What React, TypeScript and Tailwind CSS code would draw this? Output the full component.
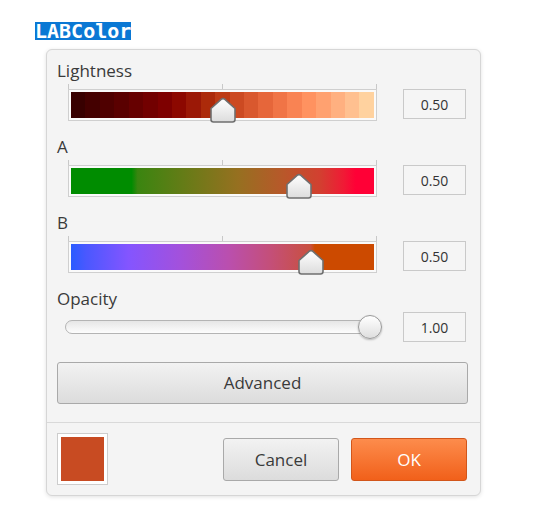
import React from "react";

const lightnessSteps = [
  "#380000", "#440000", "#4f0000", "#5a0000", "#660000", "#720000", "#7e0000",
  "#8c0800", "#9b1806", "#ac2a0a", "#bd3a14", "#cc4a22", "#d9582e", "#e6663a",
  "#f07446", "#f98353", "#ff9260", "#ffa170", "#ffb080", "#ffc090", "#ffd29f",
];

function Thumb({ left }: { left: number }) {
  return (
    <svg
      className="absolute top-[13px]"
      style={{ left }}
      width="28"
      height="26"
      viewBox="0 0 28 26"
    >
      <defs>
        <linearGradient id="thumbFill" x1="0" y1="0" x2="0" y2="1">
          <stop offset="0" stopColor="#ffffff" />
          <stop offset="1" stopColor="#dcdcdc" />
        </linearGradient>
      </defs>
      <path
        d="M2 11.5 L12.4 2.2 Q14 1 15.6 2.2 L26 11.5 V22.5 Q26 25 23.5 25 H4.5 Q2 25 2 22.5 Z"
        fill="url(#thumbFill)"
        stroke="#6f6f6f"
        strokeWidth="1.6"
        strokeLinejoin="round"
      />
    </svg>
  );
}

function ValueBox({ value }: { value: string }) {
  return (
    <div className="ml-auto w-[63px] h-[30px] border border-[#c9c9c9] bg-[#f5f5f5] flex items-center justify-center text-[14px] text-[#333]">
      {value}
    </div>
  );
}

function ColorSlider({
  label,
  thumb,
  children,
}: {
  label: string;
  thumb: number;
  children: React.ReactNode;
}) {
  return (
    <div className="flex flex-col">
      <div className="h-[22px] leading-[22px] text-[17px] text-[#3a3a3a]">{label}</div>
      <div className="flex items-end pr-[14px] mt-[2px]">
        <div className="relative ml-[11px] w-[309px]">
          <div className="flex justify-between h-[5px]">
            <div className="w-px bg-[#c8c8c8]" />
            <div className="w-px bg-[#c8c8c8]" />
            <div className="w-px bg-[#c8c8c8]" />
          </div>
          <div className="h-[32px] border border-[#cfcfcf] bg-[#fafafa] p-[2px]">
            <div className="h-full flex">{children}</div>
          </div>
          <Thumb left={thumb} />
        </div>
        <div className="ml-auto mb-[2px]">
          <ValueBox value="0.50" />
        </div>
      </div>
    </div>
  );
}

export default function App() {
  return (
    <div className="min-h-[526px] bg-white pt-[22px] pl-[35px] font-['Open_Sans','Noto_Sans',sans-serif]">
      <div className="flex">
        <span className="bg-[#0a78d4] text-white font-bold text-[20px] leading-[18px] font-['DejaVu_Sans_Mono',monospace]">
          LABColor
        </span>
      </div>

      <div className="ml-[11px] mt-[9px] w-[435px] rounded-[6px] border border-[#d6d6d6] bg-[#f4f4f4] shadow-[0_1px_4px_rgba(0,0,0,0.12)]">
        <div className="pl-[10px] pt-[10px] pb-[18px] flex flex-col gap-[15px]">
          <ColorSlider label="Lightness" thumb={141}>
            {lightnessSteps.map((c) => (
              <div key={c} className="flex-1" style={{ backgroundColor: c }} />
            ))}
          </ColorSlider>

          <ColorSlider label="A" thumb={217}>
            <div className="flex-1 bg-[linear-gradient(to_right,#008c00_0%,#008c00_20%,#3a8510_22%,#6d7a18_40%,#967020_55%,#b8582a_70%,#d24030_82%,#f01a35_90%,#ff0036_94%,#ff0036_100%)]" />
          </ColorSlider>

          <ColorSlider label="B" thumb={229}>
            <div className="flex-1 bg-[linear-gradient(to_right,#2a5cff_0%,#4a58ff_5%,#8455ff_19%,#a351dc_36%,#ba4fae_52%,#c44f78_66%,#c9503f_79%,#cc4a00_80.5%,#cc4a00_100%)]" />
          </ColorSlider>

          <div className="flex flex-col">
            <div className="h-[22px] leading-[22px] text-[17px] text-[#3a3a3a]">Opacity</div>
            <div className="flex items-center pr-[14px] mt-[2px]">
              <div className="relative ml-[8px] w-[315px] h-[30px] flex items-center">
                <div className="w-full h-[14px] rounded-full border border-[#b4b4b4] bg-[linear-gradient(to_bottom,#e6e6e6,#fdfdfd)]" />
                <div className="absolute left-[293px] top-[3px] w-[24px] h-[24px] rounded-full border border-[#9a9a9a] bg-[linear-gradient(to_bottom,#ffffff,#dedede)] shadow-[0_1px_2px_rgba(0,0,0,0.25)]" />
              </div>
              <ValueBox value="1.00" />
            </div>
          </div>

          <div className="pr-[12px] mt-[5px]">
            <button className="w-full h-[42px] rounded-[3px] border border-[#a9a9a9] bg-[linear-gradient(to_bottom,#f2f2f2,#dcdcdc)] text-[17px] text-[#3a3a3a]">
              Advanced
            </button>
          </div>
        </div>

        <div className="border-t border-[#d9d9d9] flex items-start pl-[10px] pr-[13px] pt-[10px] pb-[10px]">
          <div className="w-[51px] h-[52px] border border-[#cdcdcd] bg-white p-[3px]">
            <div className="w-full h-full bg-[#c84b22]" />
          </div>
          <div className="ml-auto mt-[5px] flex gap-[12px]">
            <button className="w-[116px] h-[43px] rounded-[3px] border border-[#a9a9a9] bg-[linear-gradient(to_bottom,#f2f2f2,#dcdcdc)] text-[17px] text-[#3a3a3a]">
              Cancel
            </button>
            <button className="w-[116px] h-[43px] rounded-[3px] border border-[#d2561a] bg-[linear-gradient(to_bottom,#fd8c4c,#f1601a)] text-[17px] text-white">
              OK
            </button>
          </div>
        </div>
      </div>
    </div>
  );
}
